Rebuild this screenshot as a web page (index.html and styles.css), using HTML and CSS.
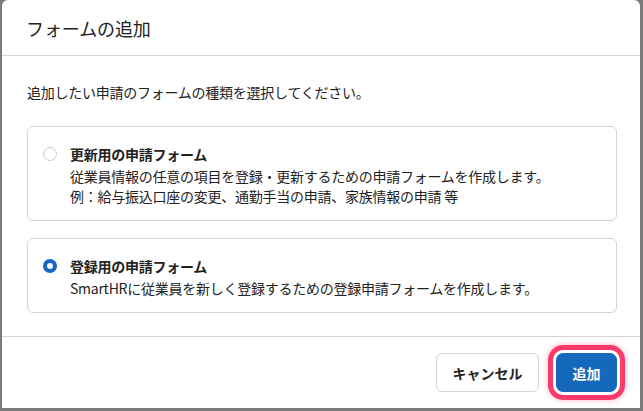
FILE: index.html
```html
<!DOCTYPE html>
<html lang="ja">
<head>
<meta charset="utf-8">
<title>フォームの追加</title>
<link rel="stylesheet" href="styles.css">
</head>
<body>
<div class="dialog">
  <header class="dialog-header">
    <h1 class="dialog-title">フォームの追加</h1>
  </header>
  <div class="dialog-body">
    <p class="lead">追加したい申請のフォームの種類を選択してください。</p>
    <div class="options">
      <label class="option">
        <span class="radio"></span>
        <span class="option-text">
          <span class="option-title">更新用の申請フォーム</span>
          <span class="option-desc">従業員情報の任意の項目を登録・更新するための申請フォームを作成します。<br>例：給与振込口座の変更、通勤手当の申請、家族情報の申請 等</span>
        </span>
      </label>
      <label class="option">
        <span class="radio radio-checked"></span>
        <span class="option-text">
          <span class="option-title">登録用の申請フォーム</span>
          <span class="option-desc">SmartHRに従業員を新しく登録するための登録申請フォームを作成します。</span>
        </span>
      </label>
    </div>
  </div>
  <footer class="dialog-footer">
    <button class="btn btn-secondary">キャンセル</button>
    <button class="btn btn-primary btn-focus">追加</button>
  </footer>
</div>
</body>
</html>
```
FILE: styles.css
```css
html, body {
  margin: 0;
  padding: 0;
}
body {
  background: #7a7a7a;
  width: 643px;
  height: 411px;
  box-sizing: border-box;
  padding: 0 3px 3px 2px;
  font-family: "Noto Sans CJK JP", "Noto Sans", sans-serif;
  color: #23221e;
  overflow: hidden;
}
.dialog {
  background: #fff;
  height: 408px;
  border-radius: 6px 6px 0 0;
  display: flex;
  flex-direction: column;
}
.dialog-header {
  height: 55px;
  border-bottom: 1px solid #d6d3d0;
  display: flex;
  align-items: center;
  padding: 0 24px;
}
.dialog-title {
  margin: 0;
  font-size: 18px;
  font-weight: 400;
  line-height: 1;
  letter-spacing: -0.1px;
}
.dialog-body {
  padding: 26px 23px 23px 25px;
  border-bottom: 1px solid #d6d3d0;
}
.lead {
  margin: 0;
  font-size: 14px;
  line-height: 20px;
  letter-spacing: -0.25px;
}
.options {
  margin-top: 24px;
  display: flex;
  flex-direction: column;
  gap: 17px;
}
.option {
  display: flex;
  align-items: flex-start;
  gap: 13px;
  border: 1px solid #d6d3d0;
  border-radius: 6px;
  padding: 17px 16px 14px 15px;
}
.radio {
  flex: none;
  width: 14px;
  height: 14px;
  box-sizing: border-box;
  border-radius: 50%;
  border: 1px solid #cfccc9;
  background: #fff;
  margin-top: 3px;
}
.radio-checked {
  border: 4px solid #1668bf;
}
.option-text {
  display: flex;
  flex-direction: column;
}
.option-title {
  font-size: 14px;
  font-weight: 700;
  line-height: 20px;
  letter-spacing: -0.25px;
}
.option-desc {
  margin-top: 2px;
  font-size: 14px;
  line-height: 20px;
  letter-spacing: -0.25px;
}
.dialog-footer {
  flex: 1;
  display: flex;
  justify-content: flex-end;
  align-items: flex-start;
  gap: 17px;
  padding: 16px 23px 0 0;
}
.btn {
  font-family: "Noto Sans CJK JP", "Noto Sans", sans-serif;
  font-size: 14px;
  font-weight: 700;
  height: 39px;
  border-radius: 6px;
  padding: 0;
  cursor: pointer;
  line-height: 1;
  white-space: nowrap;
}
.btn-secondary {
  width: 103px;
  background: #fff;
  color: #23221e;
  border: 1px solid #d6d3d0;
}
.btn-primary {
  width: 61px;
  background: #1469bd;
  color: #fff;
  border: 1px solid #1469bd;
}
.btn-focus {
  box-shadow: 0 0 0 3px #fff, 0 0 0 8px #fb3a6a, 0 0 4px 9px rgba(251, 58, 106, 0.3);
  border-radius: 7px;
}
```
